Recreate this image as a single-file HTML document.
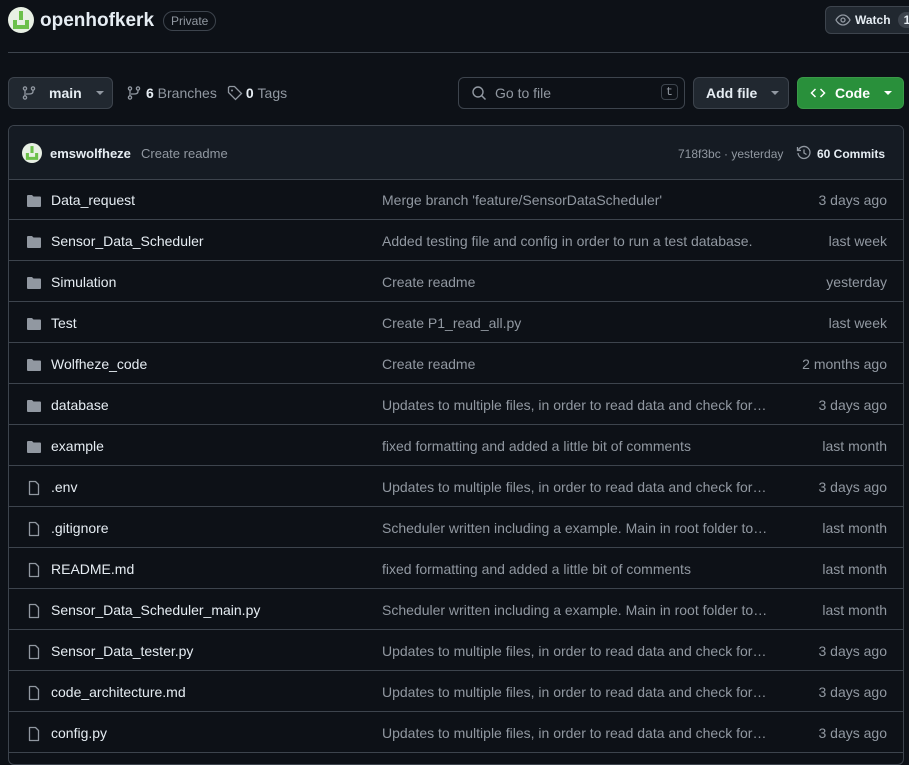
<!DOCTYPE html>
<html><head><meta charset="utf-8"><style>
*{box-sizing:border-box;margin:0;padding:0}
body{width:909px;height:753px;overflow:hidden;background:#0d1117;color:#e6edf3;font-family:"Liberation Sans",sans-serif;font-size:14px;position:relative}
.abs{position:absolute}
.btn{position:absolute;border:1px solid #3d444d;border-radius:6px;background:#212830;display:flex;align-items:center;font-weight:bold;color:#e6edf3}
.caret{width:0;height:0;border-left:4px solid transparent;border-right:4px solid transparent;border-top:4px solid #9198a1;display:inline-block}
.box{position:absolute;left:8px;top:125px;width:896px;height:640px;border:1px solid #3d444d;border-radius:6px;overflow:hidden}
.hdr{height:54px;background:#151b23;border-bottom:1px solid #3d444d;position:relative}
.row{height:41px;border-bottom:1px solid #3d444d;position:relative}
.row .ic{position:absolute;left:17px;top:14px}
.row .n{position:absolute;left:42px;top:13px}
.row .m{position:absolute;left:373px;top:13px;color:#9198a1;width:388px;white-space:nowrap;overflow:hidden;text-overflow:ellipsis}
.row .d{position:absolute;right:16px;top:13px;color:#9198a1}
</style></head><body>
<svg class="abs" style="left:8px;top:7px" width="26" height="26" viewBox="0 0 26 26"><circle cx="13" cy="13" r="13" fill="#e8f0e4"/><rect x="11" y="4" width="4" height="9" fill="#6cc04a"/><path d="M5 13h4v5h8v-5h4v9H5z" fill="#6cc04a"/></svg>
<div class="abs" style="left:40px;top:10px;font-size:19px;font-weight:bold">openhofkerk</div>
<div class="abs" style="left:163px;top:11px;border:1px solid #3d444d;border-radius:12px;padding:2px 7px;font-size:12px;color:#9198a1">Private</div>
<div class="btn" style="left:825px;top:6px;width:100px;height:28px;padding-left:9px;font-size:12px;background:#212830">
<svg width="16" height="16" viewBox="0 0 16 16" style="margin-right:4px"><path d="M1 8s2.5-5 7-5 7 5 7 5-2.5 5-7 5-7-5-7-5z" fill="none" stroke="#9198a1" stroke-width="1.3"/><circle cx="8" cy="8" r="2" fill="none" stroke="#9198a1" stroke-width="1.3"/></svg>Watch<span style="margin-left:7px;background:#3d444d;border-radius:9px;padding:1px 6px">1</span></div>
<div class="abs" style="left:8px;top:52px;width:901px;height:1px;background:#3d444d"></div>
<div class="btn" style="left:8px;top:77px;width:105px;height:32px;padding-left:12px">
<svg width="16" height="16" viewBox="0 0 16 16"><g fill="none" stroke="#9198a1" stroke-width="1.3"><circle cx="4" cy="3.5" r="1.6"/><circle cx="12" cy="3.5" r="1.6"/><circle cx="4" cy="12.5" r="1.6"/><path d="M4 5v6M12 5v1.5c0 2-2 2.5-4 2.5H5"/></g></svg>
<span style="margin-left:12px">main</span><span class="caret" style="margin-left:14px"></span></div>
<div class="abs" style="left:126px;top:85px;display:flex;align-items:center;color:#9198a1">
<svg width="16" height="16" viewBox="0 0 16 16"><g fill="none" stroke="#9198a1" stroke-width="1.3"><circle cx="4" cy="3.5" r="1.6"/><circle cx="12" cy="3.5" r="1.6"/><circle cx="4" cy="12.5" r="1.6"/><path d="M4 5v6M12 5v1.5c0 2-2 2.5-4 2.5H5"/></g></svg>
<b style="color:#e6edf3;margin-left:4px">6</b>&nbsp;Branches
<svg width="16" height="16" viewBox="0 0 16 16" style="margin-left:10px"><path d="M1.5 2.5v5l7 7 6-6-7-7h-5z" fill="none" stroke="#9198a1" stroke-width="1.3"/><circle cx="5" cy="5.5" r="1" fill="#9198a1"/></svg>
<b style="color:#e6edf3;margin-left:3px">0</b>&nbsp;Tags</div>
<div class="abs" style="left:458px;top:77px;width:227px;height:32px;border:1px solid #3d444d;border-radius:6px;background:#0d1117">
<svg class="abs" style="left:12px;top:7px" width="16" height="16" viewBox="0 0 16 16"><circle cx="7" cy="7" r="5" fill="none" stroke="#9198a1" stroke-width="1.4"/><path d="M10.5 10.5l4 4" stroke="#9198a1" stroke-width="1.5"/></svg>
<span class="abs" style="left:36px;top:7px;color:#9198a1">Go to file</span>
<span class="abs" style="right:6px;top:6px;border:1px solid #3d444d;border-radius:4px;padding:0 4px;font-size:12px;font-family:'Liberation Mono',monospace;color:#9198a1">t</span></div>
<div class="btn" style="left:693px;top:77px;width:96px;height:32px;padding-left:12px">Add file<span class="caret" style="margin-left:14px"></span></div>
<div class="btn" style="left:797px;top:77px;width:107px;height:32px;padding-left:12px;background:#29903b;border-color:#3a9a48;color:#fff">
<svg width="16" height="16" viewBox="0 0 16 16"><path d="M5.5 4L1.5 8l4 4M10.5 4l4 4-4 4" fill="none" stroke="#fff" stroke-width="1.5"/></svg><span style="margin-left:9px">Code</span><span class="caret" style="margin-left:14px;border-top-color:#fff"></span></div>
<div class="box">
<div class="hdr">
<svg class="abs" style="left:13px;top:17px" width="20" height="20" viewBox="0 0 26 26"><circle cx="13" cy="13" r="13" fill="#e8f0e4"/><rect x="11" y="4" width="4" height="9" fill="#6cc04a"/><path d="M5 13h4v5h8v-5h4v9H5z" fill="#6cc04a"/></svg>
<b class="abs" style="left:41px;top:20px;font-size:13px">emswolfheze</b>
<span class="abs" style="left:132px;top:20px;font-size:13px;color:#9198a1">Create readme</span>
<span class="abs" style="left:669px;top:21px;font-size:12px;color:#9198a1">718f3bc · yesterday</span>
<svg class="abs" style="left:787px;top:19px" width="16" height="16" viewBox="0 0 16 16"><path d="M2.5 5A6 6 0 1 1 2 8" fill="none" stroke="#9198a1" stroke-width="1.3"/><path d="M1.5 2v3.5H5" fill="none" stroke="#9198a1" stroke-width="1.3"/><path d="M8 4.5V8l2.5 1.5" fill="none" stroke="#9198a1" stroke-width="1.3"/></svg>
<b class="abs" style="left:808px;top:21px;font-size:12px">60 Commits</b>
</div>
</div>
<div class="abs" style="left:9px;top:179px;width:894px">
<div class="row"><svg class="ic" width="16" height="16" viewBox="0 0 16 16"><path d="M1 3a1 1 0 0 1 1-1h4l1.5 1.5H14a1 1 0 0 1 1 1V13a1 1 0 0 1-1 1H2a1 1 0 0 1-1-1z" fill="#9198a1"/></svg><span class="n">Data_request</span><span class="m">Merge branch 'feature/SensorDataScheduler'</span><span class="d">3 days ago</span></div>
<div class="row"><svg class="ic" width="16" height="16" viewBox="0 0 16 16"><path d="M1 3a1 1 0 0 1 1-1h4l1.5 1.5H14a1 1 0 0 1 1 1V13a1 1 0 0 1-1 1H2a1 1 0 0 1-1-1z" fill="#9198a1"/></svg><span class="n">Sensor_Data_Scheduler</span><span class="m">Added testing file and config in order to run a test database.</span><span class="d">last week</span></div>
<div class="row"><svg class="ic" width="16" height="16" viewBox="0 0 16 16"><path d="M1 3a1 1 0 0 1 1-1h4l1.5 1.5H14a1 1 0 0 1 1 1V13a1 1 0 0 1-1 1H2a1 1 0 0 1-1-1z" fill="#9198a1"/></svg><span class="n">Simulation</span><span class="m">Create readme</span><span class="d">yesterday</span></div>
<div class="row"><svg class="ic" width="16" height="16" viewBox="0 0 16 16"><path d="M1 3a1 1 0 0 1 1-1h4l1.5 1.5H14a1 1 0 0 1 1 1V13a1 1 0 0 1-1 1H2a1 1 0 0 1-1-1z" fill="#9198a1"/></svg><span class="n">Test</span><span class="m">Create P1_read_all.py</span><span class="d">last week</span></div>
<div class="row"><svg class="ic" width="16" height="16" viewBox="0 0 16 16"><path d="M1 3a1 1 0 0 1 1-1h4l1.5 1.5H14a1 1 0 0 1 1 1V13a1 1 0 0 1-1 1H2a1 1 0 0 1-1-1z" fill="#9198a1"/></svg><span class="n">Wolfheze_code</span><span class="m">Create readme</span><span class="d">2 months ago</span></div>
<div class="row"><svg class="ic" width="16" height="16" viewBox="0 0 16 16"><path d="M1 3a1 1 0 0 1 1-1h4l1.5 1.5H14a1 1 0 0 1 1 1V13a1 1 0 0 1-1 1H2a1 1 0 0 1-1-1z" fill="#9198a1"/></svg><span class="n">database</span><span class="m">Updates to multiple files, in order to read data and check for errors</span><span class="d">3 days ago</span></div>
<div class="row"><svg class="ic" width="16" height="16" viewBox="0 0 16 16"><path d="M1 3a1 1 0 0 1 1-1h4l1.5 1.5H14a1 1 0 0 1 1 1V13a1 1 0 0 1-1 1H2a1 1 0 0 1-1-1z" fill="#9198a1"/></svg><span class="n">example</span><span class="m">fixed formatting and added a little bit of comments</span><span class="d">last month</span></div>
<div class="row"><svg class="ic" width="16" height="16" viewBox="0 0 16 16"><path d="M3.5 1.5h6l3 3v10h-9z" fill="none" stroke="#9198a1" stroke-width="1.3" stroke-linejoin="round"/></svg><span class="n">.env</span><span class="m">Updates to multiple files, in order to read data and check for errors</span><span class="d">3 days ago</span></div>
<div class="row"><svg class="ic" width="16" height="16" viewBox="0 0 16 16"><path d="M3.5 1.5h6l3 3v10h-9z" fill="none" stroke="#9198a1" stroke-width="1.3" stroke-linejoin="round"/></svg><span class="n">.gitignore</span><span class="m">Scheduler written including a example. Main in root folder to run</span><span class="d">last month</span></div>
<div class="row"><svg class="ic" width="16" height="16" viewBox="0 0 16 16"><path d="M3.5 1.5h6l3 3v10h-9z" fill="none" stroke="#9198a1" stroke-width="1.3" stroke-linejoin="round"/></svg><span class="n">README.md</span><span class="m">fixed formatting and added a little bit of comments</span><span class="d">last month</span></div>
<div class="row"><svg class="ic" width="16" height="16" viewBox="0 0 16 16"><path d="M3.5 1.5h6l3 3v10h-9z" fill="none" stroke="#9198a1" stroke-width="1.3" stroke-linejoin="round"/></svg><span class="n">Sensor_Data_Scheduler_main.py</span><span class="m">Scheduler written including a example. Main in root folder to run</span><span class="d">last month</span></div>
<div class="row"><svg class="ic" width="16" height="16" viewBox="0 0 16 16"><path d="M3.5 1.5h6l3 3v10h-9z" fill="none" stroke="#9198a1" stroke-width="1.3" stroke-linejoin="round"/></svg><span class="n">Sensor_Data_tester.py</span><span class="m">Updates to multiple files, in order to read data and check for errors</span><span class="d">3 days ago</span></div>
<div class="row"><svg class="ic" width="16" height="16" viewBox="0 0 16 16"><path d="M3.5 1.5h6l3 3v10h-9z" fill="none" stroke="#9198a1" stroke-width="1.3" stroke-linejoin="round"/></svg><span class="n">code_architecture.md</span><span class="m">Updates to multiple files, in order to read data and check for errors</span><span class="d">3 days ago</span></div>
<div class="row"><svg class="ic" width="16" height="16" viewBox="0 0 16 16"><path d="M3.5 1.5h6l3 3v10h-9z" fill="none" stroke="#9198a1" stroke-width="1.3" stroke-linejoin="round"/></svg><span class="n">config.py</span><span class="m">Updates to multiple files, in order to read data and check for errors</span><span class="d">3 days ago</span></div>
</div>
</body></html>
